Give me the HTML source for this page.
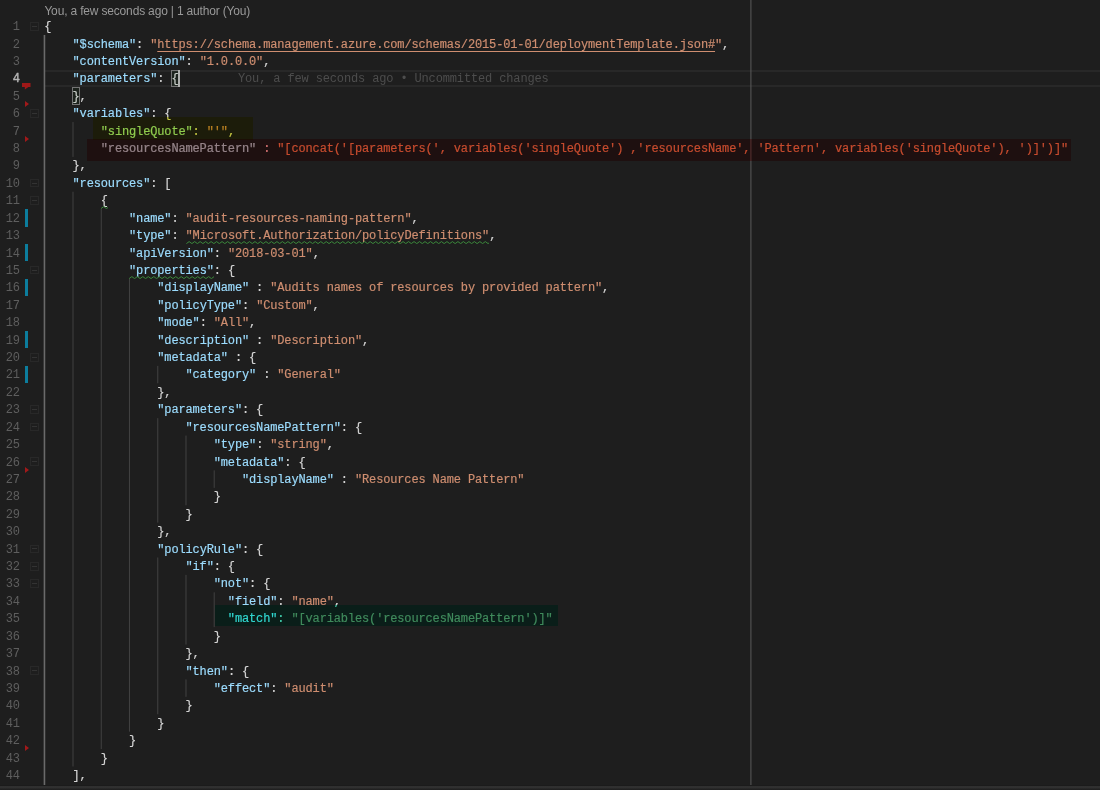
<!DOCTYPE html>
<html lang="en">
<head>
<meta charset="utf-8">
<title>deploymentTemplate.json</title>
<style>
html,body{margin:0;padding:0;background:#1e1e1e;}
body{width:1100px;height:790px;overflow:hidden;position:relative;font-family:"Liberation Mono","DejaVu Sans Mono",monospace;}
#ed{position:absolute;left:0;top:0;width:1100px;height:790px;overflow:hidden;background:#1e1e1e;}
.ln{position:absolute;left:0;width:19.8px;text-align:right;color:#5e5e5e;font-size:12.000px;letter-spacing:-0.1412px;height:17.417px;line-height:17.417px;white-space:pre;}
.ln.act{color:#b4b4b4;-webkit-text-stroke:0.4px;}
.l{-webkit-text-stroke:0.18px;position:absolute;left:44.30px;color:#d4d4d4;font-size:12.000px;letter-spacing:-0.1412px;height:17.417px;line-height:17.417px;white-space:pre;}
.k{color:#9cdcfe;}
.s{color:#cf8e70;}
.r8 .k{color:#94f5ff;}
.r8 .s{color:#c88d55;}
.u{text-decoration:underline;text-underline-offset:3px;text-decoration-thickness:1px;text-decoration-skip-ink:none;}
.g{position:absolute;width:1px;background:#404040;}
.g.a{background:#707070;}
.fold{position:absolute;left:30.3px;width:6.4px;height:6.6px;border:1px solid #282828;}
.fold:after{content:"";position:absolute;left:1.2px;top:2.8px;width:4.4px;height:1px;background:#333;}
.mod{position:absolute;left:24.7px;width:3px;background:#0c7d9d;}
.del{position:absolute;left:24.7px;width:0;height:0;border-left:4px solid #a1191a;border-top:3.6px solid transparent;border-bottom:3.6px solid transparent;}
.hl{position:absolute;mix-blend-mode:multiply;}
.lens{position:absolute;left:44.4px;top:2.8px;font-family:"Liberation Sans","DejaVu Sans",sans-serif;color:#999;white-space:pre;}
.blame{position:absolute;color:#4d4d4d;white-space:pre;}
.bm{position:absolute;border:1px solid #747474;background:rgba(0,100,0,.06);box-sizing:border-box;}
.sq{position:absolute;}
</style>
</head>
<body>
<div id="ed">
<div style="position:absolute;left:44.3px;right:0;top:69.60px;height:17.42px;box-sizing:border-box;border-top:2px solid #282828;border-bottom:2px solid #282828;"></div>
<svg style="position:absolute;left:0;top:0" width="1100" height="790" viewBox="0 0 1100 790">
<rect x="750.4" y="0" width="1" height="786" fill="#5a5a5a"/>
<rect x="43.65" y="34.97" width="1.6" height="751.03" fill="#6a6a6a"/>
<rect x="72.49" y="122.05" width="1.05" height="34.83" fill="#404040"/>
<rect x="72.49" y="191.72" width="1.05" height="574.76" fill="#404040"/>
<rect x="100.73" y="209.14" width="1.05" height="539.93" fill="#404040"/>
<rect x="128.97" y="278.81" width="1.05" height="452.84" fill="#404040"/>
<rect x="157.21" y="365.89" width="1.05" height="17.42" fill="#404040"/>
<rect x="157.21" y="418.14" width="1.05" height="104.50" fill="#404040"/>
<rect x="157.21" y="557.48" width="1.05" height="156.75" fill="#404040"/>
<rect x="185.45" y="435.56" width="1.05" height="69.67" fill="#404040"/>
<rect x="185.45" y="574.89" width="1.05" height="69.67" fill="#404040"/>
<rect x="185.45" y="679.40" width="1.05" height="17.42" fill="#404040"/>
<rect x="213.69" y="470.39" width="1.05" height="17.42" fill="#404040"/>
<rect x="213.69" y="592.31" width="1.05" height="34.83" fill="#404040"/>
</svg>
<div class="ln" style="top:19.150px">1</div>
<div class="fold" style="top:22.05px"></div>
<div class="ln" style="top:36.567px">2</div>
<div class="ln" style="top:53.984px">3</div>
<div class="ln act" style="top:71.401px">4</div>
<div class="ln" style="top:88.818px">5</div>
<div class="ln" style="top:106.235px">6</div>
<div class="fold" style="top:109.14px"></div>
<div class="del" style="top:101.04px"></div>
<div class="ln" style="top:123.652px">7</div>
<div class="ln" style="top:141.069px">8</div>
<div class="del" style="top:135.87px"></div>
<div class="ln" style="top:158.486px">9</div>
<div class="ln" style="top:175.903px">10</div>
<div class="fold" style="top:178.80px"></div>
<div class="ln" style="top:193.320px">11</div>
<div class="fold" style="top:196.22px"></div>
<div class="ln" style="top:210.737px">12</div>
<div class="mod" style="top:209.14px;height:17.42px"></div>
<div class="ln" style="top:228.154px">13</div>
<div class="ln" style="top:245.571px">14</div>
<div class="mod" style="top:243.97px;height:17.42px"></div>
<div class="ln" style="top:262.988px">15</div>
<div class="fold" style="top:265.89px"></div>
<div class="ln" style="top:280.405px">16</div>
<div class="mod" style="top:278.81px;height:17.42px"></div>
<div class="ln" style="top:297.822px">17</div>
<div class="ln" style="top:315.239px">18</div>
<div class="ln" style="top:332.656px">19</div>
<div class="mod" style="top:331.06px;height:17.42px"></div>
<div class="ln" style="top:350.073px">20</div>
<div class="fold" style="top:352.97px"></div>
<div class="ln" style="top:367.490px">21</div>
<div class="mod" style="top:365.89px;height:17.42px"></div>
<div class="ln" style="top:384.907px">22</div>
<div class="ln" style="top:402.324px">23</div>
<div class="fold" style="top:405.22px"></div>
<div class="ln" style="top:419.741px">24</div>
<div class="fold" style="top:422.64px"></div>
<div class="ln" style="top:437.158px">25</div>
<div class="ln" style="top:454.575px">26</div>
<div class="fold" style="top:457.48px"></div>
<div class="ln" style="top:471.992px">27</div>
<div class="del" style="top:466.79px"></div>
<div class="ln" style="top:489.409px">28</div>
<div class="ln" style="top:506.826px">29</div>
<div class="ln" style="top:524.243px">30</div>
<div class="ln" style="top:541.660px">31</div>
<div class="fold" style="top:544.56px"></div>
<div class="ln" style="top:559.077px">32</div>
<div class="fold" style="top:561.98px"></div>
<div class="ln" style="top:576.494px">33</div>
<div class="fold" style="top:579.39px"></div>
<div class="ln" style="top:593.911px">34</div>
<div class="ln" style="top:611.328px">35</div>
<div class="ln" style="top:628.745px">36</div>
<div class="ln" style="top:646.162px">37</div>
<div class="ln" style="top:663.579px">38</div>
<div class="fold" style="top:666.48px"></div>
<div class="ln" style="top:680.996px">39</div>
<div class="ln" style="top:698.413px">40</div>
<div class="ln" style="top:715.830px">41</div>
<div class="ln" style="top:733.247px">42</div>
<div class="ln" style="top:750.664px">43</div>
<div class="del" style="top:745.46px"></div>
<div class="ln" style="top:768.081px">44</div>
<svg style="position:absolute;left:21px;top:82px" width="12" height="9" viewBox="0 0 12 9"><path d="M1 1.1h8.5v4h-2.1l-3.5 2.5h-0.1v-2.5h-2.8z" fill="#a01818"/></svg>
<div class="lens" id="lens" style="font-size:12px;letter-spacing:-0.17px;line-height:16px;">You, a few seconds ago | 1 author (You)</div>
<div class="l" style="top:19.150px">{</div>
<div class="l" style="top:36.567px">    <span class="k">"$schema"</span>: <span class="s">"<span class="u">https://schema.management.azure.com/schemas/2015-01-01/deploymentTemplate.json#</span>"</span>,</div>
<div class="l" style="top:53.984px">    <span class="k">"contentVersion"</span>: <span class="s">"1.0.0.0"</span>,</div>
<div class="l" style="top:71.401px">    <span class="k">"parameters"</span>: {</div>
<div class="l" style="top:88.818px">    },</div>
<div class="l" style="top:106.235px">    <span class="k">"variables"</span>: {</div>
<div class="l" style="top:123.652px">        <span class="k">"singleQuote"</span>: <span class="s">"'"</span>,</div>
<div class="l r8" style="top:141.069px">        <span class="k">"resourcesNamePattern"</span> : <span class="s">"[concat('[parameters(', variables('singleQuote') ,'resourcesName', 'Pattern', variables('singleQuote'), ')]')]"</span></div>
<div class="l" style="top:158.486px">    },</div>
<div class="l" style="top:175.903px">    <span class="k">"resources"</span>: [</div>
<div class="l" style="top:193.320px">        <span class="q">{</span></div>
<div class="l" style="top:210.737px">            <span class="k">"name"</span>: <span class="s">"audit-resources-naming-pattern"</span>,</div>
<div class="l" style="top:228.154px">            <span class="k">"type"</span>: <span class="s q">"Microsoft.Authorization/policyDefinitions"</span>,</div>
<div class="l" style="top:245.571px">            <span class="k">"apiVersion"</span>: <span class="s">"2018-03-01"</span>,</div>
<div class="l" style="top:262.988px">            <span class="k q">"properties"</span>: {</div>
<div class="l" style="top:280.405px">                <span class="k">"displayName"</span> : <span class="s">"Audits names of resources by provided pattern"</span>,</div>
<div class="l" style="top:297.822px">                <span class="k">"policyType"</span>: <span class="s">"Custom"</span>,</div>
<div class="l" style="top:315.239px">                <span class="k">"mode"</span>: <span class="s">"All"</span>,</div>
<div class="l" style="top:332.656px">                <span class="k">"description"</span> : <span class="s">"Description"</span>,</div>
<div class="l" style="top:350.073px">                <span class="k">"metadata"</span> : {</div>
<div class="l" style="top:367.490px">                    <span class="k">"category"</span> : <span class="s">"General"</span></div>
<div class="l" style="top:384.907px">                },</div>
<div class="l" style="top:402.324px">                <span class="k">"parameters"</span>: {</div>
<div class="l" style="top:419.741px">                    <span class="k">"resourcesNamePattern"</span>: {</div>
<div class="l" style="top:437.158px">                        <span class="k">"type"</span>: <span class="s">"string"</span>,</div>
<div class="l" style="top:454.575px">                        <span class="k">"metadata"</span>: {</div>
<div class="l" style="top:471.992px">                            <span class="k">"displayName"</span> : <span class="s">"Resources Name Pattern"</span></div>
<div class="l" style="top:489.409px">                        }</div>
<div class="l" style="top:506.826px">                    }</div>
<div class="l" style="top:524.243px">                },</div>
<div class="l" style="top:541.660px">                <span class="k">"policyRule"</span>: {</div>
<div class="l" style="top:559.077px">                    <span class="k">"if"</span>: {</div>
<div class="l" style="top:576.494px">                        <span class="k">"not"</span>: {</div>
<div class="l" style="top:593.911px">                          <span class="k">"field"</span>: <span class="s">"name"</span>,</div>
<div class="l" style="top:611.328px">                          <span class="k">"match"</span>: <span class="s">"[variables('resourcesNamePattern')]"</span></div>
<div class="l" style="top:628.745px">                        }</div>
<div class="l" style="top:646.162px">                    },</div>
<div class="l" style="top:663.579px">                    <span class="k">"then"</span>: {</div>
<div class="l" style="top:680.996px">                        <span class="k">"effect"</span>: <span class="s">"audit"</span></div>
<div class="l" style="top:698.413px">                    }</div>
<div class="l" style="top:715.830px">                }</div>
<div class="l" style="top:733.247px">            }</div>
<div class="l" style="top:750.664px">        }</div>
<div class="l" style="top:768.081px">    ],</div>
<div class="bm" style="left:171.08px;top:69.80px;width:7.46px;height:17.42px"></div>
<div class="bm" style="left:72.24px;top:87.22px;width:7.46px;height:17.42px"></div>
<div style="position:absolute;left:177.94px;top:69.80px;width:2px;height:17.42px;background:#aeafad"></div>
<div class="blame" style="left:238px;top:71.401px;font-size:12.000px;letter-spacing:-0.1412px;line-height:17.417px">You, a few seconds ago • Uncommitted changes</div>
<svg class="sq" style="left:100.78px;top:205.94px" width="7.1" height="3.4" viewBox="0 0 7.1 3.4"><path d="M0 2.6 L2.75 0.6 L5.50 2.6 L8.25 0.6" fill="none" stroke="#3c8a3c" stroke-width="1"/></svg>
<svg class="sq" style="left:185.50px;top:240.77px" width="303.6" height="3.4" viewBox="0 0 303.6 3.4"><path d="M0 2.6 L2.75 0.6 L5.50 2.6 L8.25 0.6 L11.00 2.6 L13.75 0.6 L16.50 2.6 L19.25 0.6 L22.00 2.6 L24.75 0.6 L27.50 2.6 L30.25 0.6 L33.00 2.6 L35.75 0.6 L38.50 2.6 L41.25 0.6 L44.00 2.6 L46.75 0.6 L49.50 2.6 L52.25 0.6 L55.00 2.6 L57.75 0.6 L60.50 2.6 L63.25 0.6 L66.00 2.6 L68.75 0.6 L71.50 2.6 L74.25 0.6 L77.00 2.6 L79.75 0.6 L82.50 2.6 L85.25 0.6 L88.00 2.6 L90.75 0.6 L93.50 2.6 L96.25 0.6 L99.00 2.6 L101.75 0.6 L104.50 2.6 L107.25 0.6 L110.00 2.6 L112.75 0.6 L115.50 2.6 L118.25 0.6 L121.00 2.6 L123.75 0.6 L126.50 2.6 L129.25 0.6 L132.00 2.6 L134.75 0.6 L137.50 2.6 L140.25 0.6 L143.00 2.6 L145.75 0.6 L148.50 2.6 L151.25 0.6 L154.00 2.6 L156.75 0.6 L159.50 2.6 L162.25 0.6 L165.00 2.6 L167.75 0.6 L170.50 2.6 L173.25 0.6 L176.00 2.6 L178.75 0.6 L181.50 2.6 L184.25 0.6 L187.00 2.6 L189.75 0.6 L192.50 2.6 L195.25 0.6 L198.00 2.6 L200.75 0.6 L203.50 2.6 L206.25 0.6 L209.00 2.6 L211.75 0.6 L214.50 2.6 L217.25 0.6 L220.00 2.6 L222.75 0.6 L225.50 2.6 L228.25 0.6 L231.00 2.6 L233.75 0.6 L236.50 2.6 L239.25 0.6 L242.00 2.6 L244.75 0.6 L247.50 2.6 L250.25 0.6 L253.00 2.6 L255.75 0.6 L258.50 2.6 L261.25 0.6 L264.00 2.6 L266.75 0.6 L269.50 2.6 L272.25 0.6 L275.00 2.6 L277.75 0.6 L280.50 2.6 L283.25 0.6 L286.00 2.6 L288.75 0.6 L291.50 2.6 L294.25 0.6 L297.00 2.6 L299.75 0.6 L302.50 2.6 L305.25 0.6" fill="none" stroke="#3c8a3c" stroke-width="1"/></svg>
<svg class="sq" style="left:129.02px;top:275.61px" width="84.7" height="3.4" viewBox="0 0 84.7 3.4"><path d="M0 2.6 L2.75 0.6 L5.50 2.6 L8.25 0.6 L11.00 2.6 L13.75 0.6 L16.50 2.6 L19.25 0.6 L22.00 2.6 L24.75 0.6 L27.50 2.6 L30.25 0.6 L33.00 2.6 L35.75 0.6 L38.50 2.6 L41.25 0.6 L44.00 2.6 L46.75 0.6 L49.50 2.6 L52.25 0.6 L55.00 2.6 L57.75 0.6 L60.50 2.6 L63.25 0.6 L66.00 2.6 L68.75 0.6 L71.50 2.6 L74.25 0.6 L77.00 2.6 L79.75 0.6 L82.50 2.6 L85.25 0.6" fill="none" stroke="#3c8a3c" stroke-width="1"/></svg>
<div class="hl" style="left:93.2px;top:117.1px;width:159.7px;height:23.1px;background:rgb(235,237,77)"></div>
<div class="hl" style="left:87px;top:139.1px;width:983.5px;height:21.8px;background:rgb(255,135,135)"></div>
<div class="hl" style="left:215.4px;top:604.8px;width:342.3px;height:21.1px;background:rgb(77,250,209)"></div>
<div style="position:absolute;left:0;top:785px;width:1100px;height:5px;background:linear-gradient(#1b1b1b 0,#1b1b1b .5px,#2f2f2f 1px,#303030 2.5px,#232323 4px,#1e1e1e 5px)"></div>
</div>
</body>
</html>
